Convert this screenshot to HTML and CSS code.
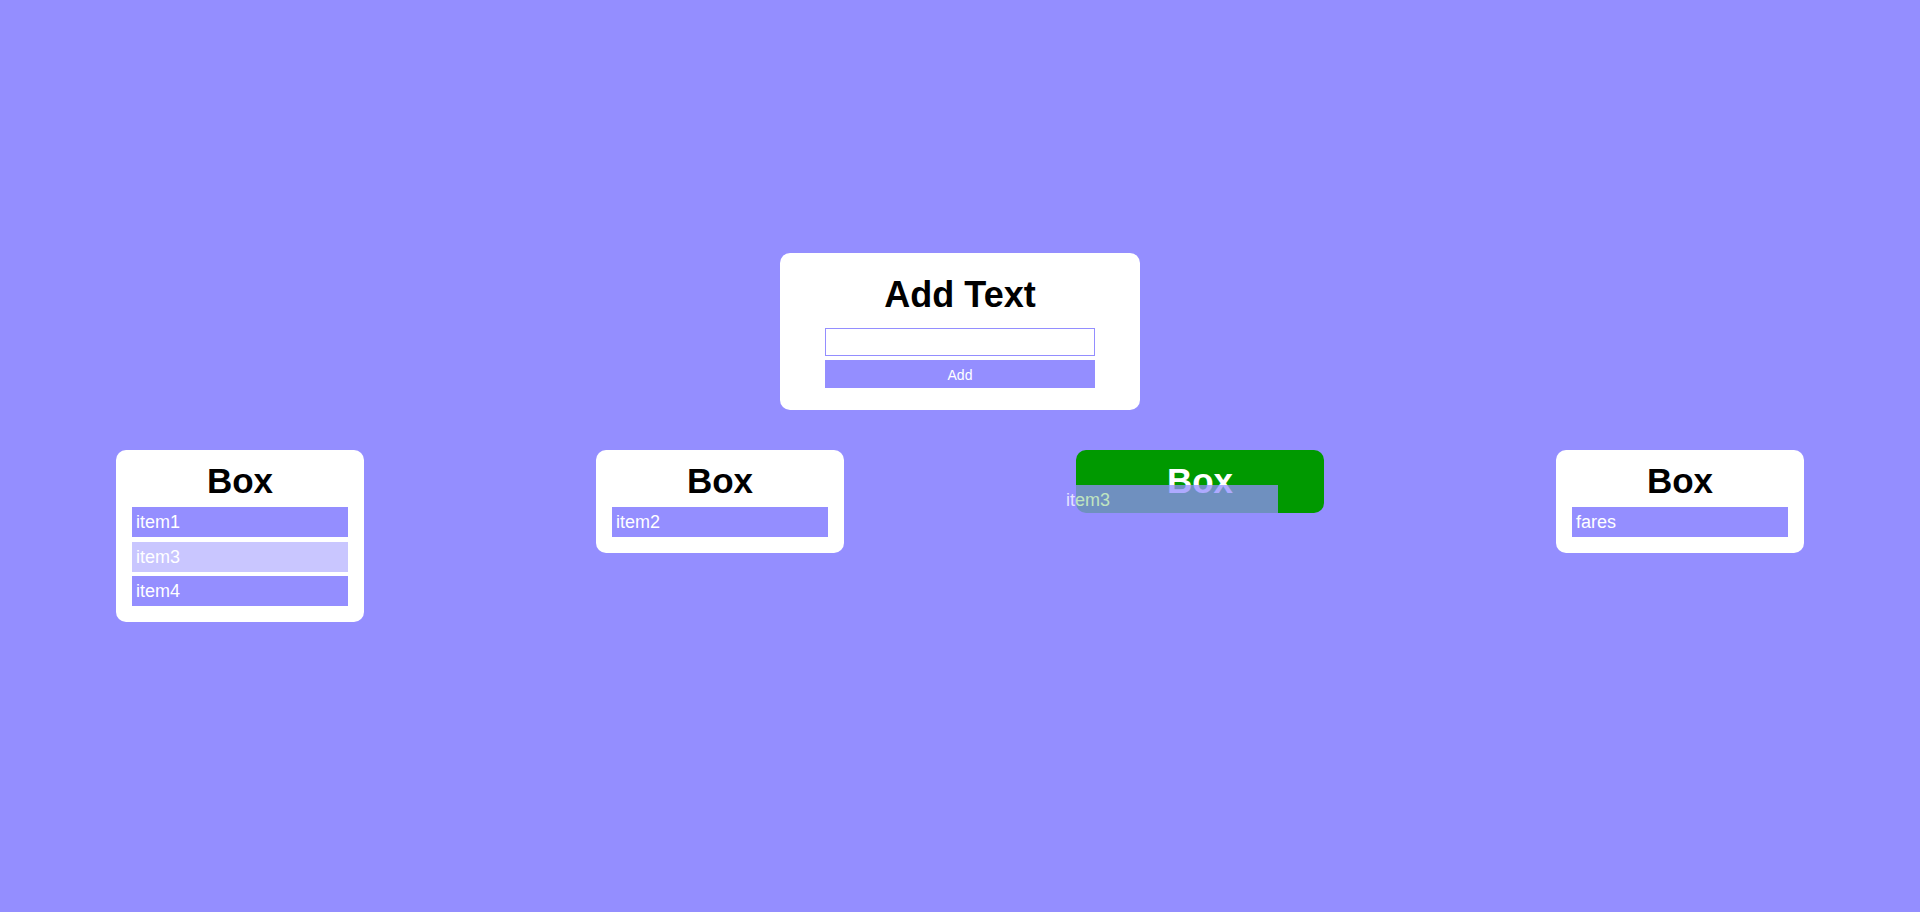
FILE: index.html
```html
<!DOCTYPE html>
<html lang="en">
<head>
<meta charset="utf-8">
<title>Boxes</title>
<link rel="stylesheet" href="styles.css">
</head>
<body>
<main class="page">
  <section class="add-card">
    <h1 class="add-title">Add Text</h1>
    <input class="add-input" type="text">
    <button class="add-button" type="button">Add</button>
  </section>
  <section class="boxes">
    <div class="column">
      <div class="box">
        <h2 class="box-title">Box</h2>
        <ul class="items">
          <li class="item">item1</li>
          <li class="item item-placeholder">item3</li>
          <li class="item">item4</li>
        </ul>
      </div>
    </div>
    <div class="column">
      <div class="box">
        <h2 class="box-title">Box</h2>
        <ul class="items">
          <li class="item">item2</li>
        </ul>
      </div>
    </div>
    <div class="column">
      <div class="box box-active">
        <h2 class="box-title">Box</h2>
        <div class="item item-dragging">item3</div>
      </div>
    </div>
    <div class="column">
      <div class="box">
        <h2 class="box-title">Box</h2>
        <ul class="items">
          <li class="item">fares</li>
        </ul>
      </div>
    </div>
  </section>
</main>
</body>
</html>
```

FILE: styles.css
```css
* {
  box-sizing: border-box;
}

html, body {
  margin: 0;
  padding: 0;
}

body {
  background: #948eff;
  font-family: "Liberation Sans", Arial, sans-serif;
  min-height: 912px;
}

.page {
  display: flex;
  flex-direction: column;
  align-items: center;
  padding-top: 253px;
}

.add-card {
  width: 360px;
  background: #ffffff;
  border-radius: 10px;
  padding: 22px 45px 22px;
  display: flex;
  flex-direction: column;
}

.add-title {
  margin: 0 0 13px;
  font-size: 36px;
  font-weight: 700;
  text-align: center;
  color: #000;
  line-height: 40px;
}

.add-input {
  display: block;
  width: 270px;
  height: 28px;
  margin: 0;
  border: 1px solid #948eff;
  background: #fff;
  outline: none;
  padding: 0 4px;
  font-family: inherit;
}

.add-button {
  display: block;
  width: 270px;
  height: 28px;
  margin: 4px 0 0;
  border: none;
  background: #948eff;
  color: #fff;
  font-family: "Liberation Sans", Arial, sans-serif;
  font-size: 14px;
  line-height: 30px;
  padding: 0;
}

.boxes {
  width: 100%;
  margin-top: 40px;
  display: grid;
  grid-template-columns: repeat(4, 1fr);
  align-items: start;
}

.column {
  display: flex;
  justify-content: center;
}

.box {
  position: relative;
  width: 248px;
  background: #ffffff;
  border-radius: 10px;
  padding: 11px 16px 16px;
}

.box-title {
  margin: 0;
  font-size: 35px;
  font-weight: 700;
  line-height: 40px;
  text-align: center;
  color: #000;
}

.items {
  list-style: none;
  margin: 6px 0 0;
  padding: 0;
  display: flex;
  flex-direction: column;
  gap: 4.5px;
}

.item {
  height: 30px;
  background: #948eff;
  color: #fff;
  font-size: 18px;
  line-height: 22px;
  padding: 4px 4px;
}

.item-placeholder {
  opacity: 0.5;
}

.box-active {
  background: #009900;
  padding-bottom: 12px;
}

.box-active .box-title {
  color: #fff;
}

.item-dragging {
  position: absolute;
  left: -14px;
  top: 35px;
  width: 216px;
  opacity: 0.75;
}
```
